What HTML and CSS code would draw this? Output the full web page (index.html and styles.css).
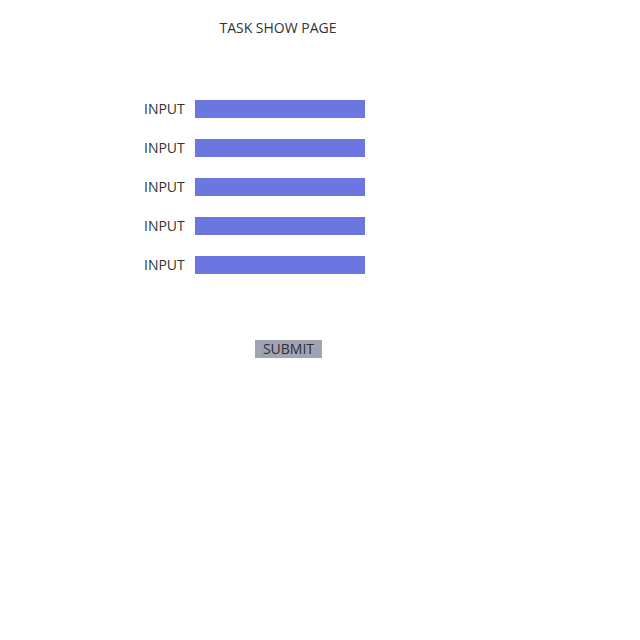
FILE: index.html
```html
<!DOCTYPE html>
<html>
<head>
<meta charset="utf-8">
<link rel="stylesheet" href="styles.css">
</head>
<body>
<div class="page">
  <h1 class="title">TASK SHOW PAGE</h1>
  <form class="form">
    <div class="rows">
      <div class="row"><label class="label">INPUT</label><span class="bar"></span></div>
      <div class="row"><label class="label">INPUT</label><span class="bar"></span></div>
      <div class="row"><label class="label">INPUT</label><span class="bar"></span></div>
      <div class="row"><label class="label">INPUT</label><span class="bar"></span></div>
      <div class="row"><label class="label">INPUT</label><span class="bar"></span></div>
    </div>
    <div class="actions"><button type="button" class="submit">SUBMIT</button></div>
  </form>
</div>
</body>
</html>
```
FILE: styles.css
```css
html, body {
  margin: 0;
  padding: 0;
  background: #ffffff;
}
body {
  font-family: "Open Sans", "DejaVu Sans", sans-serif;
  font-size: 14px;
  color: #333333;
}
.page {
  width: 556px;
  padding-top: 18px;
}
.title {
  margin: 0;
  font-size: 14px;
  font-weight: 400;
  line-height: 19px;
  text-align: center;
}
.form {
  margin-top: 63px;
}
.rows {
  display: flex;
  flex-direction: column;
  gap: 21px;
  padding-left: 144px;
}
.row {
  display: flex;
  align-items: center;
  gap: 10px;
  height: 18px;
}
.label {
  width: 41px;
  line-height: 18px;
  white-space: nowrap;
}
.bar {
  display: block;
  width: 170px;
  height: 18px;
  background: #6b76e0;
}
.actions {
  margin-top: 66px;
  padding-left: 255px;
}
.submit {
  display: block;
  height: 18px;
  width: 67px;
  padding: 0;
  border: none;
  background: #a0a3b2;
  color: #2d2f3a;
  font-family: "Open Sans", "DejaVu Sans", sans-serif;
  font-size: 14px;
  line-height: 18px;
  text-align: center;
}
```
